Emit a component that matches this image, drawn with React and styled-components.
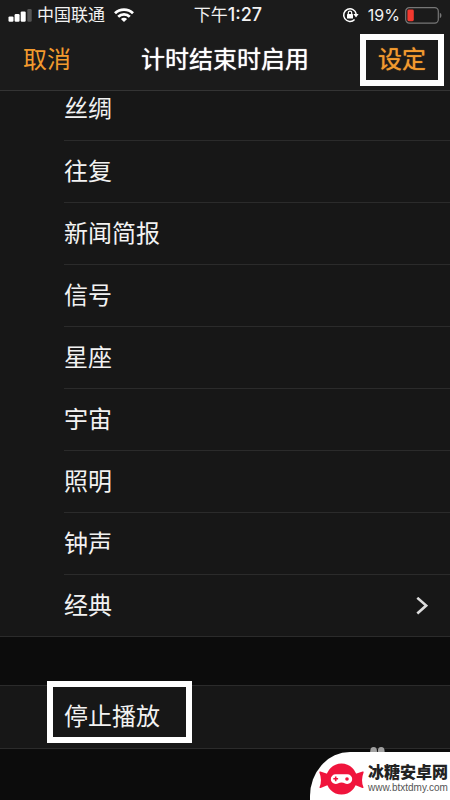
import React from 'react';
import styled, { createGlobalStyle } from 'styled-components';

const GlobalStyle = createGlobalStyle`
  * {
    box-sizing: border-box;
  }

  body {
    margin: 0;
    background: #0c0c0c;
    color: #f2f2f2;
    font-family: Inter, 'Noto Sans CJK SC', sans-serif;
  }
`;

const Screen = styled.div`
  position: relative;
  min-height: 100vh;
  overflow: hidden;
`;

const Header = styled.header`
  position: relative;
  z-index: 1;
  background: #1b1b1b;
  border-bottom: 1px solid #343434;
`;

const StatusBar = styled.div`
  display: grid;
  grid-template-columns: 1fr auto 1fr;
  align-items: center;
  height: 30px;
  padding: 0 8px;
  font-size: 17px;
  line-height: 30px;
`;

const StatusGroup = styled.div`
  display: flex;
  align-items: center;
  justify-content: ${(props) => (props.$end ? 'flex-end' : 'flex-start')};
  gap: 5px;
`;

const Carrier = styled.span`
  margin-right: 4px;
`;

const Time = styled.span`
  padding-left: 6px;
`;

const Digits = styled.span`
  font-size: 18px;
  font-weight: 500;
`;

const Percent = styled.span`
  font-size: 16px;
  margin-left: 4px;
`;

const NavBar = styled.nav`
  display: grid;
  grid-template-columns: 1fr auto 1fr;
  align-items: center;
  height: 60px;
  padding: 0 6px;
`;

const NavButton = styled.button`
  justify-self: ${(props) => (props.$marked ? 'end' : 'start')};
  height: 52px;
  padding: 0 ${(props) => (props.$marked ? '12px' : '17px')};
  border: ${(props) => (props.$marked ? '6px solid #fff' : '0')};
  background: none;
  color: #f29a2e;
  font-family: inherit;
  font-size: 24px;
  line-height: 36px;
  text-shadow: ${(props) => (props.$marked ? '0 0 1px currentColor' : 'none')};
`;

const Title = styled.h1`
  margin: 0;
  color: #fff;
  font-size: 24px;
  font-weight: 400;
  line-height: 36px;
  text-shadow: 0 0 1px currentColor;
`;

// The list is scrolled a little, so its first row starts under the header.
const List = styled.ul`
  margin: ${(props) => (props.$scrolled ? '-13px' : '48px')} 0 0;
  padding: 0 0 0 64px;
  list-style: none;
  background: #171717;
  border-bottom: 1px solid #2b2b2b;
  border-top: ${(props) => (props.$scrolled ? '0' : '1px solid #2b2b2b')};
`;

const Row = styled.li`
  position: relative;
  height: 62px;

  & + & {
    border-top: 1px solid #2b2b2b;
  }
`;

const RowButton = styled.button`
  display: flex;
  align-items: center;
  justify-content: space-between;
  width: 100%;
  height: 100%;
  padding: 0 22px 0 0;
  border: 0;
  background: none;
  color: inherit;
  font-family: inherit;
  font-size: 24px;
  line-height: 36px;
  text-align: left;
`;

const Highlight = styled.span`
  position: absolute;
  top: -5px;
  left: -17px;
  width: 145px;
  height: 62px;
  border: 6px solid #fff;
  pointer-events: none;
`;

const Paw = styled.svg`
  position: absolute;
  right: 64px;
  bottom: 43px;
`;

const Watermark = styled.footer`
  position: absolute;
  right: 0;
  bottom: 0;
  display: flex;
  align-items: center;
  gap: 4px;
  height: 48px;
  padding: 6px 2px 0 9px;
  border-top-left-radius: 40px 44px;
  background: #fff;
`;

const SiteName = styled.div`
  color: #222;
  font-family: 'Liberation Sans', 'Noto Sans CJK SC', sans-serif;
  font-size: 16px;
  font-weight: 900;
  line-height: 18px;
`;

const SiteUrl = styled.div`
  color: #555;
  font-family: 'Liberation Sans', sans-serif;
  font-size: 10px;
  line-height: 12px;
`;

const sounds = ['丝绸', '往复', '新闻简报', '信号', '星座', '宇宙', '照明', '钟声', '经典'];

function SignalIcon() {
  return (
    <svg width="24" height="13" viewBox="0 0 24 13" fill="#fff">
      <rect x="0.5" y="7.4" width="5" height="5.4" rx="1.2" />
      <rect x="6.6" y="5" width="5" height="7.8" rx="1.2" />
      <rect x="12.7" y="2.4" width="5" height="10.4" rx="1.2" />
      <rect x="19.3" y="0" width="4.4" height="12.8" rx="1.2" fill="#555" />
    </svg>
  );
}

function WifiIcon() {
  return (
    <svg width="20" height="14" viewBox="0 0 20 14" fill="none" stroke="#fff" strokeWidth="2.8">
      <path d="M1 5.2C6 .4 14 .4 19 5.2" />
      <path d="M4.2 8.7c3.3-3.1 8.3-3.1 11.6 0" />
      <path d="M6.9 11c1.8-1.6 4.4-1.6 6.2 0L10 14z" fill="#fff" stroke="none" />
    </svg>
  );
}

function RotationLockIcon() {
  return (
    <svg width="17" height="16" viewBox="0 0 17 16" fill="none" stroke="#fff" strokeWidth="1.5">
      <path d="M12.6 12.4A6.3 6.3 0 1 1 14.2 7" />
      <path d="M11.4 7h5.2L14 10.4z" fill="#fff" stroke="none" />
      <rect x="5" y="7" width="6" height="4.6" rx=".6" fill="#fff" stroke="none" />
      <path d="M6.3 7.2V5.8a1.7 1.7 0 0 1 3.4 0v1.4" strokeWidth="1.2" />
    </svg>
  );
}

function BatteryIcon() {
  return (
    <svg width="37" height="17" viewBox="0 0 37 17" fill="none">
      <rect x=".7" y=".7" width="32.6" height="15.4" rx="3.6" stroke="#777" strokeWidth="1.2" />
      <rect x="2.4" y="2.6" width="6.4" height="11.6" rx="1.4" fill="#f2392f" />
      <path d="M34.8 5.8c2.2.8 2.2 4.6 0 5.4z" fill="#777" />
    </svg>
  );
}

function Chevron() {
  return (
    <svg width="12" height="18" viewBox="0 0 12 18" fill="none" stroke="#ddd" strokeWidth="2.6">
      <path d="M1.3 .8 10.2 8.6l-8.9 7.8" />
    </svg>
  );
}

function CandyLogo() {
  return (
    <svg width="45" height="32" viewBox="0 0 45 32" fill="#f0143c">
      <path d="M.4 9.4Q0 8.2 1.4 8.6L9 11v11l-7.4 3Q0 25.4.6 24 3.4 17 .4 9.4z" />
      <path d="M44.6 9.4q.4-1.2-1-.8L36 11v11l7.4 3q1.6.4 1-1-2.8-7 .2-14.6z" />
      <circle cx="22.5" cy="16" r="15.4" />
      <path
        d="M16.7 11.2h11.6a4.9 4.9 0 0 1 0 9.8c-2.4 0-2.8-1.4-5.8-1.4s-3.4 1.4-5.8 1.4a4.9 4.9 0 0 1 0-9.8z"
        fill="#fff"
      />
      <path d="M15.9 13.4h1.6V15h1.6v1.6h-1.6v1.6h-1.6v-1.6h-1.6V15h1.6z" />
      <circle cx="28" cy="16" r="1.8" />
    </svg>
  );
}

function App() {
  return (
    <>
      <GlobalStyle />
      <Screen>
        <Header>
          <StatusBar>
            <StatusGroup>
              <SignalIcon />
              <Carrier>中国联通</Carrier>
              <WifiIcon />
            </StatusGroup>
            <Time>
              下午<Digits>1:27</Digits>
            </Time>
            <StatusGroup $end>
              <RotationLockIcon />
              <Percent>19%</Percent>
              <BatteryIcon />
            </StatusGroup>
          </StatusBar>
          <NavBar>
            <NavButton type="button">取消</NavButton>
            <Title>计时结束时启用</Title>
            <NavButton type="button" $marked>
              设定
            </NavButton>
          </NavBar>
        </Header>
        <List $scrolled>
          {sounds.map((sound) => (
            <Row key={sound}>
              <RowButton type="button">
                {sound}
                {sound === '经典' && <Chevron />}
              </RowButton>
            </Row>
          ))}
        </List>
        <List>
          <Row>
            <RowButton type="button">停止播放</RowButton>
            <Highlight />
          </Row>
        </List>
        <Paw width="16" height="10" viewBox="0 0 16 10" fill="#a0a0a0">
          <ellipse cx="3.6" cy="4.4" rx="3.4" ry="4.4" />
          <ellipse cx="11.2" cy="4.4" rx="3.4" ry="4.4" />
        </Paw>
        <Watermark>
          <CandyLogo />
          <div>
            <SiteName>冰糖安卓网</SiteName>
            <SiteUrl>www.btxtdmy.com</SiteUrl>
          </div>
        </Watermark>
      </Screen>
    </>
  );
}

export default App;
